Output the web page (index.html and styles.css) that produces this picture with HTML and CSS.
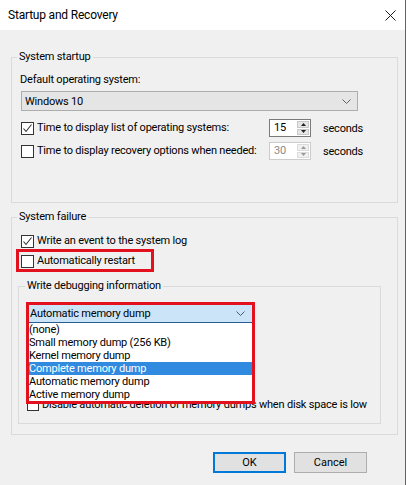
FILE: index.html
```html
<!DOCTYPE html>
<html>
<head>
<meta charset="utf-8">
<link rel="stylesheet" href="styles.css">
</head>
<body>
<div class="window">
  <div class="titlebar">
    <span class="title">Startup and Recovery</span>
    <svg class="close" width="11" height="11" viewBox="0 0 11 11"><path d="M0.5 0.5 L10.5 10.5 M10.5 0.5 L0.5 10.5" stroke="#1a1a1a" stroke-width="1" fill="none"/></svg>
  </div>
  <div class="content">
    <div class="group g-startup">
      <div class="legend">System startup</div>
      <div class="label">Default operating system:</div>
      <div class="select">
        <span>Windows 10</span>
        <svg class="chev" width="9" height="5" viewBox="0 0 9 5"><path d="M0.5 0.5 L4.5 4.5 L8.5 0.5" stroke="#606060" fill="none"/></svg>
      </div>
      <div class="row r1">
        <div class="check"><span class="box"><svg width="11" height="11" viewBox="0 0 11 11"><path d="M1.5 5.5 L4 8.5 L9.5 1.5" stroke="#333" stroke-width="1.1" fill="none"/></svg></span><span>Time to display list of operating systems:</span></div>
        <div class="spin"><span class="spin-val">15</span><span class="spin-btns"><span class="sb"><svg width="5" height="3" viewBox="0 0 5 3"><path d="M0 3 L2.5 0 L5 3Z" fill="#222"/></svg></span><span class="sb"><svg width="5" height="3" viewBox="0 0 5 3"><path d="M0 0 L2.5 3 L5 0Z" fill="#222"/></svg></span></span></div>
        <span class="unit">seconds</span>
      </div>
      <div class="row r2">
        <div class="check"><span class="box"></span><span>Time to display recovery options when needed:</span></div>
        <div class="spin disabled"><span class="spin-val">30</span><span class="spin-btns"><span class="sb"><svg width="5" height="3" viewBox="0 0 5 3"><path d="M0 3 L2.5 0 L5 3Z" fill="#9a9a9a"/></svg></span><span class="sb"><svg width="5" height="3" viewBox="0 0 5 3"><path d="M0 0 L2.5 3 L5 0Z" fill="#9a9a9a"/></svg></span></span></div>
        <span class="unit">seconds</span>
      </div>
    </div>

    <div class="group g-failure">
      <div class="legend">System failure</div>
      <div class="check c-event"><span class="box"><svg width="11" height="11" viewBox="0 0 11 11"><path d="M1.5 5.5 L4 8.5 L9.5 1.5" stroke="#333" stroke-width="1.1" fill="none"/></svg></span><span>Write an event to the system log</span></div>
      <div class="check c-restart"><span class="box"></span><span>Automatically restart</span><span class="mark mark-restart"></span></div>

      <div class="group g-debug">
        <div class="legend">Write debugging information</div>
        <div class="combo">
          <div class="combo-head"><span>Automatic memory dump</span><svg class="chev" width="9" height="5" viewBox="0 0 9 5"><path d="M0.5 0.5 L4.5 4.5 L8.5 0.5" stroke="#505a66" fill="none"/></svg></div>
          <ul class="combo-list">
            <li>(none)</li>
            <li>Small memory dump (256 KB)</li>
            <li>Kernel memory dump</li>
            <li class="sel">Complete memory dump</li>
            <li>Automatic memory dump</li>
            <li>Active memory dump</li>
          </ul>
          <span class="mark mark-combo"></span>
        </div>
        <div class="check c-disable"><span class="box"></span><span>Disable automatic deletion of memory dumps when disk space is low</span></div>
      </div>
    </div>

    <div class="buttons">
      <button class="btn ok">OK</button>
      <button class="btn">Cancel</button>
    </div>
  </div>
</div>
</body>
</html>
```
FILE: styles.css
```css
* { box-sizing: border-box; }
html, body { margin: 0; padding: 0; }
body {
  width: 409px;
  height: 485px;
  background: #ffffff;
  font-family: Roboto, "Liberation Sans", Arial, sans-serif;
  font-size: 11px;
  letter-spacing: -0.2px;
  color: #000;
  overflow: hidden;
}
.window {
  width: 406px;
  height: 485px;
  background: #f0f0f0;
  border-right: 1px solid #2d6fb0;
  display: flex;
  flex-direction: column;
}
.titlebar {
  height: 30px;
  background: #fff;
  display: flex;
  align-items: center;
  justify-content: space-between;
  padding: 0 9px 0 8px;
}
.title { font-size: 12px; line-height: 16px; color: #000; }
.close { display: block; margin-top: 0; }

.content {
  padding: 27px 8px 0 11px;
  display: flex;
  flex-direction: column;
}
.group {
  border: 1px solid #dadada;
  display: flex;
  flex-direction: column;
  align-items: flex-start;
}
.legend {
  line-height: 16px;
  height: 16px;
  margin-top: -9px;
  padding: 0 2px;
  background: #f0f0f0;
}
.g-startup {
  width: 387px;
  padding: 0 0 42px 9px;
}
.g-startup > .legend { margin-left: -4px; }
.label { line-height: 16px; margin-top: 7px; margin-left: -1px; }
.select {
  margin-top: 3px;
  width: 337px;
  height: 20px;
  background: #e5e5e5;
  border: 1px solid #adadad;
  display: flex;
  align-items: center;
  justify-content: space-between;
  padding: 0 6px 0 3px;
}
.row {
  display: grid;
  grid-template-columns: 248px 42px auto;
  align-items: center;
  height: 18px;
}
.r1 { margin-top: 8px; }
.r2 { margin-top: 5px; }
.unit { margin-left: 12px; }
.check {
  display: flex;
  align-items: center;
  gap: 3px;
  line-height: 16px;
  position: relative;
}
.box {
  width: 13px;
  height: 13px;
  border: 1px solid #333;
  background: #fff;
  display: flex;
  align-items: center;
  justify-content: center;
  flex: none;
}
.box svg { display: block; }
.spin {
  height: 18px;
  display: flex;
  border: 1px solid #7a7a7a;
  background: #fff;
}
.spin-val { flex: 1; padding-left: 4px; line-height: 16px; }
.spin-btns {
  width: 14px;
  display: flex;
  flex-direction: column;
  gap: 1px;
  padding: 1px;
  background: #fff;
}
.sb {
  flex: 1;
  background: #e6e6e6;
  border: 1px solid #c8c8c8;
  display: flex;
  align-items: center;
  justify-content: center;
}
.sb svg { display: block; }
.spin.disabled { border-color: #cccccc; }
.spin.disabled .spin-val { color: #8a8a8a; }
.spin.disabled .sb { background: #f0f0f0; border-color: #dcdcdc; }

.g-failure {
  width: 387px;
  margin-top: 14px;
  padding: 0 0 10px 9px;
}
.g-failure > .legend { margin-left: -4px; }
.c-event { margin-top: 8px; }
.c-restart { margin-top: 4px; }
.mark {
  position: absolute;
  border: 3px solid #e3101e;
  pointer-events: none;
  z-index: 5;
}
.mark-restart { left: -5px; top: -4px; width: 138px; height: 23px; }

.g-debug {
  width: 363px;
  margin-left: -3px;
  margin-top: 17px;
  padding: 0 0 10px 8px;
}
.g-debug > .legend { margin-left: -2px; }
.combo {
  position: relative;
  margin-top: 11px;
  margin-left: 2px;
  width: 223px;
}
.combo-head {
  height: 18px;
  background: #cce4f7;
  border-bottom: 1px solid #2a5d8f;
  display: flex;
  align-items: center;
  justify-content: space-between;
  padding: 0 7px 0 1px;
}
.combo-list {
  position: absolute;
  left: 0;
  top: 18px;
  width: 223px;
  margin: 0;
  padding: 0;
  list-style: none;
  background: #fff;
  z-index: 4;
}
.combo-list li { height: 13px; line-height: 13px; padding-left: 0; white-space: nowrap; }
.combo-list li.sel { background: #2f8ae0; color: #fff; }
.mark-combo { left: -3px; top: -3px; width: 229px; height: 102px; }
.c-disable { margin-top: 74px; }
.c-disable .box { width: 12px; height: 12px; }

.buttons {
  margin-top: 17px;
  display: flex;
  justify-content: flex-end;
  gap: 8px;
  padding-right: 30px;
}
.btn {
  width: 73px;
  height: 21px;
  background: #e1e1e1;
  border: 1px solid #adadad;
  font-family: Roboto, "Liberation Sans", Arial, sans-serif;
  font-size: 11px;
  color: #000;
  padding: 0;
  margin: 0;
}
.btn.ok { border: 2px solid #0078d7; }
```
